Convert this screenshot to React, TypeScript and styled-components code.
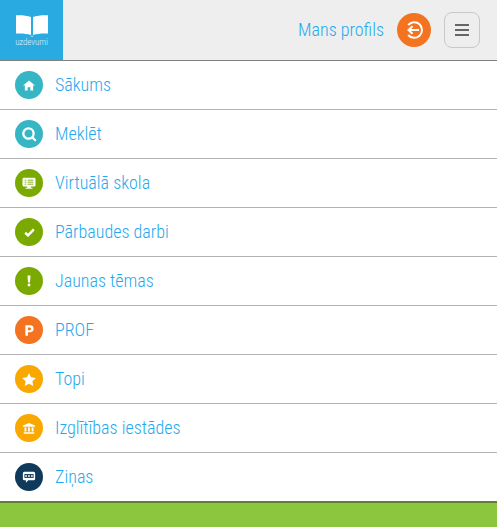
import React from "react";
import styled, { createGlobalStyle } from "styled-components";

const Global = createGlobalStyle`
  html, body { margin: 0; padding: 0; background: #fff; }
  body { font-family: "Roboto Condensed", Roboto, "Liberation Sans", sans-serif; font-weight: 300; font-stretch: 75%; }
`;
const Page = styled.div`
  width: 497px; height: 527px; display: flex; flex-direction: column; overflow: hidden;
`;
const Header = styled.header`
  height: 60px; flex: none; background: #eee; border-bottom: 1px solid #808080;
  display: flex; align-items: stretch; justify-content: space-between;
`;
const Logo = styled.a`
  width: 63px; background: #29abe2; display: flex; flex-direction: column; align-items: center;
  padding-top: 15px; box-sizing: border-box;
`;
const LogoText = styled.span`
  font-size: 9px; line-height: 9px; font-weight: 300; font-stretch: 100%; letter-spacing: -0.1px;
  color: rgba(255, 255, 255, 0.85); margin-top: 1px;
`;
const HeaderRight = styled.div`
  display: flex; align-items: center; padding-right: 17px;
`;
const Profile = styled.a`
  font-size: 18px; color: #1fa9ee; margin-right: 13px; line-height: 20px;
`;
const Logout = styled.div`
  width: 34px; height: 34px; border-radius: 50%; background: #f47321; display: flex;
  align-items: center; justify-content: center; margin-right: 13px;
`;
const Burger = styled.button`
  width: 36px; height: 36px; padding: 0; box-sizing: border-box; border: 1px solid #c8c8c8;
  border-radius: 8px; background: #eee; display: flex; flex-direction: column;
  align-items: center; justify-content: center; gap: 3px;
`;
const BurgerLine = styled.span`
  width: 14px; height: 2px; background: #666; display: block;
`;
const Menu = styled.nav`
  display: flex; flex-direction: column; flex: none;
`;
const Row = styled.a`
  height: 48px; border-bottom: 1px solid #b3b3b3; display: flex; align-items: center;
  padding-left: 15px; gap: 12px; color: #1fa9ee; font-size: 18px; flex: none;
  &:last-child { border-bottom: none; }
`;
const Label = styled.span`
  line-height: 20px;
`;
const Badge = styled.span<{ $bg: string }>`
  width: 28px; height: 28px; border-radius: 50%; background: ${p => p.$bg}; display: flex;
  align-items: center; justify-content: center; flex: none;
`;
const Footer = styled.footer`
  flex: 1; background: #8cc63f; border-top: 2px solid #5f7f35;
`;

const BookIcon = () => (
  <svg width="32" height="22" viewBox="0 0 32 22">
    <path fill="#fff" d="M0 0.2 C6 0 11 0.4 15 2 V20 C11 18.6 5 18.2 0 18.6Z" />
    <path fill="#fff" d="M32 0.2 C26 0 21 0.4 17 2 V20 C21 18.6 27 18.2 32 18.6Z" />
    <path fill="none" stroke="#a9ddf4" strokeWidth="1" d="M15 20.6 L16 22 L17 20.6" />
  </svg>
);
const LogoutIcon = () => (
  <svg width="22" height="22" viewBox="0 0 22 22" fill="none" stroke="#fff">
    <path strokeWidth="2" d="M5.2 6 A7.8 7.8 0 1 1 5.2 16" />
    <path strokeWidth="2" d="M16 11 H5.5 M9.5 7.2 L5.5 11 L9.5 14.8" />
  </svg>
);
const Home = () => (
  <svg width="12" height="11" viewBox="0 0 13 12"><path fill="#fff" d="M6.5 0.5 L13 6 H11 V11.5 H8 V8 H5 V11.5 H2 V6 H0Z" /></svg>
);
const Search = () => (
  <svg width="16" height="16" viewBox="0 0 18 18" fill="none" stroke="#fff">
    <circle cx="8.4" cy="8.4" r="5.8" strokeWidth="2.6" />
    <path d="M12.8 12.8 L16 16" strokeWidth="2.4" strokeLinecap="round" />
  </svg>
);
const Screen = () => (
  <svg width="14" height="13" viewBox="0 0 16 15">
    <path fill="#fff" d="M2 1 H14 A1.5 1.5 0 0 1 15.5 2.5 V9.5 A1.5 1.5 0 0 1 14 11 H10 V12.5 H12 V13.5 H4 V12.5 H6 V11 H2 A1.5 1.5 0 0 1 .5 9.5 V2.5 A1.5 1.5 0 0 1 2 1Z" />
    <path stroke="#7aa900" strokeWidth="1" d="M3 3.7 H5 M6.5 3.7 H13 M3 6 H5 M6.5 6 H13 M3 8.3 H5 M6.5 8.3 H13" />
  </svg>
);
const Check = () => (
  <svg width="11" height="9" viewBox="0 0 13 11" fill="none"><path stroke="#fff" strokeWidth="3" d="M1.2 5.8 L4.7 9 L11.8 1.8" /></svg>
);
const Excl = () => (
  <svg width="4" height="12" viewBox="0 0 5 14"><path fill="#fff" d="M0.6 0 H4.4 L3.7 9 H1.3Z" /><circle cx="2.5" cy="12" r="1.8" fill="#fff" /></svg>
);
const PIcon = () => (
  <svg width="9" height="11" viewBox="0 0 12 14"><path fill="#fff" fillRule="evenodd" d="M0.5 0 H6.8 A4.6 4.6 0 0 1 6.8 9.3 H3.9 V14 H0.5Z M3.9 2.9 V6.5 H6.3 A1.8 1.8 0 0 0 6.3 2.9Z" /></svg>
);
const Star = () => (
  <svg width="14" height="13" viewBox="0 0 16 15"><path fill="#fff" d="M8 0 L10.4 5 L16 5.7 L11.9 9.5 L13 15 L8 12.3 L3 15 L4.1 9.5 L0 5.7 L5.6 5Z" /></svg>
);
const Bank = () => (
  <svg width="12" height="13" viewBox="0 0 16 15">
    <path fill="#fff" d="M8 0 L16 3.6 V5 H0 V3.6Z M2 6 H4.5 V11.5 H2Z M6.7 6 H9.3 V11.5 H6.7Z M11.5 6 H14 V11.5 H11.5Z M1 12.5 H15 V14.5 H1Z" />
  </svg>
);
const Chat = () => (
  <svg width="14" height="13" viewBox="0 0 18 17">
    <path fill="#fff" d="M3 1 H15 A2 2 0 0 1 17 3 V10 A2 2 0 0 1 15 12 H8 L5 15.5 V12 H3 A2 2 0 0 1 1 10 V3 A2 2 0 0 1 3 1Z" />
    <path fill="#0f3a5c" d="M3 4 H15 V9 H3Z" />
    <path fill="#fff" d="M4 5.5 H6.4 V7.5 H4Z M7.8 5.5 H10.2 V7.5 H7.8Z M11.6 5.5 H14 V7.5 H11.6Z" />
  </svg>
);

const items: [string, string, React.ReactNode][] = [
  ["Sākums", "#36b5c4", <Home />],
  ["Meklēt", "#36b5c4", <Search />],
  ["Virtuālā skola", "#7aa900", <Screen />],
  ["Pārbaudes darbi", "#7aa900", <Check />],
  ["Jaunas tēmas", "#7aa900", <Excl />],
  ["PROF", "#f47321", <PIcon />],
  ["Topi", "#f9a800", <Star />],
  ["Izglītības iestādes", "#f9a800", <Bank />],
  ["Ziņas", "#0f3a5c", <Chat />],
];

export default function App() {
  return (
    <Page>
      <Global />
      <Header>
        <Logo>
          <BookIcon />
          <LogoText>uzdevumi</LogoText>
        </Logo>
        <HeaderRight>
          <Profile>Mans profils</Profile>
          <Logout><LogoutIcon /></Logout>
          <Burger><BurgerLine /><BurgerLine /><BurgerLine /></Burger>
        </HeaderRight>
      </Header>
      <Menu>
        {items.map(([label, bg, icon]) => (
          <Row key={label}>
            <Badge $bg={bg}>{icon}</Badge>
            <Label>{label}</Label>
          </Row>
        ))}
      </Menu>
      <Footer />
    </Page>
  );
}
